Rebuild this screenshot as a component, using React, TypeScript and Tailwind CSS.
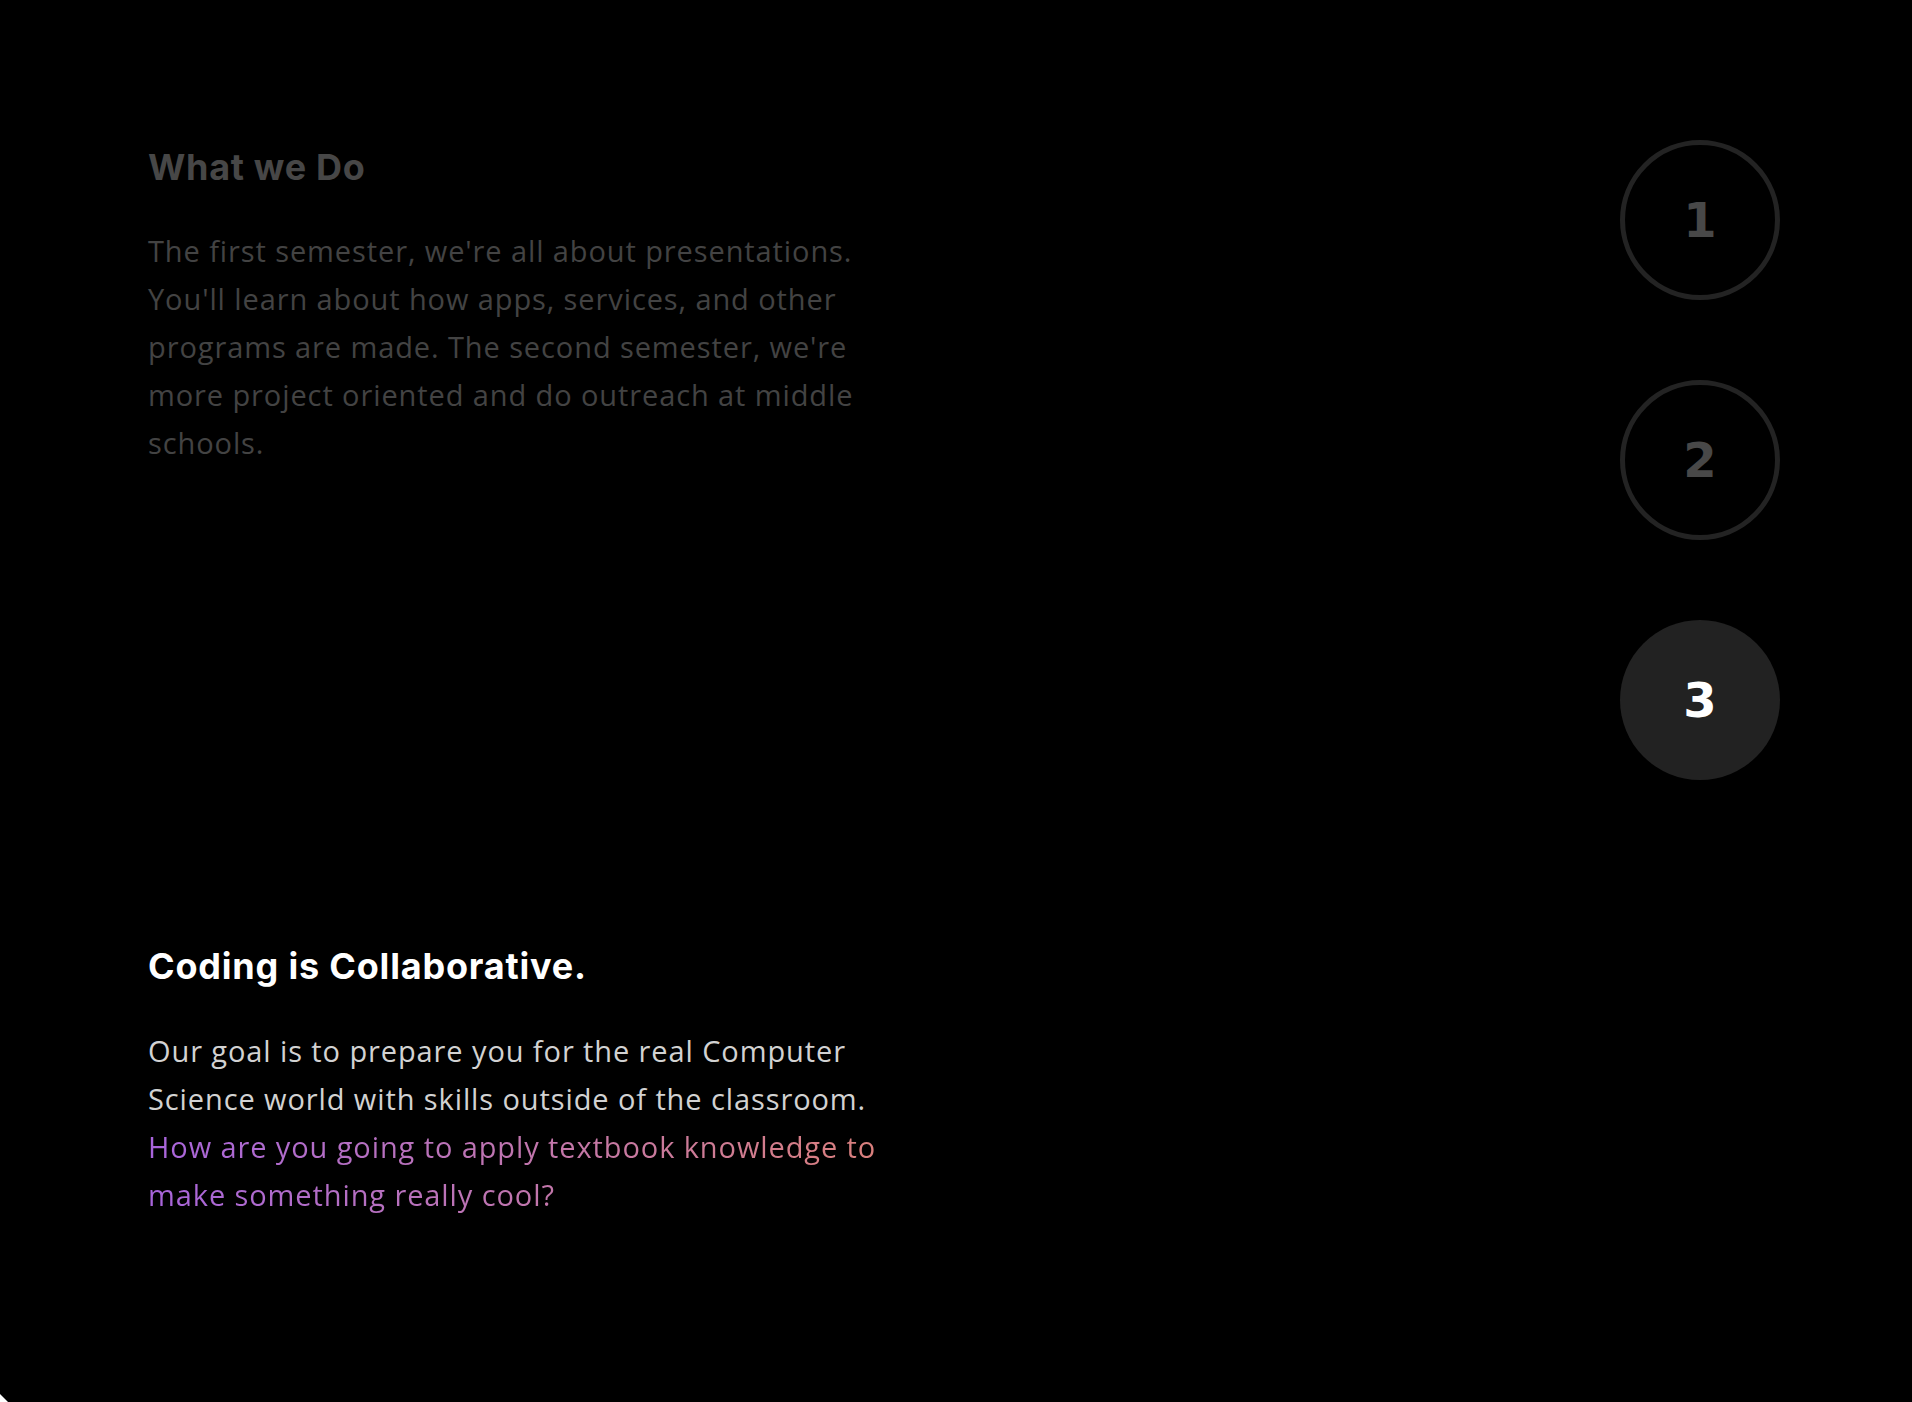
import React from "react";

const body = { fontFamily: "'Open Sans', 'Noto Sans', sans-serif" };
const head = { fontFamily: "Inter, 'Noto Sans', sans-serif" };
const num = { fontFamily: "'DejaVu Sans', sans-serif" };

function Circle({ n, active }: { n: string; active?: boolean }) {
  return (
    <div
      className={
        active
          ? "w-[160px] h-[160px] rounded-full bg-[#222222] flex items-center justify-center"
          : "w-[160px] h-[160px] rounded-full border-[5px] border-[#232323] flex items-center justify-center"
      }
    >
      <span
        style={num}
        className={
          active
            ? "text-[48px] font-bold text-white leading-none"
            : "text-[48px] font-bold text-[#484848] leading-none"
        }
      >
        {n}
      </span>
    </div>
  );
}

export default function App() {
  return (
    <div className="relative min-h-[1402px] w-full bg-black overflow-hidden">
      <div className="pl-[148px] pr-[132px] pt-[140px]">
        <div className="flex flex-row justify-between items-start">
          <div className="mt-[5px]">
            <h2
              style={head}
              className="text-[36px] leading-[45px] font-bold tracking-[0.7px] text-[#474747]"
            >
              What we Do
            </h2>
            <p
              style={body}
              className="mt-[37px] text-[29px] leading-[48px] font-medium tracking-[0.9px] text-[#434343] whitespace-nowrap"
            >
              The first semester, we're all about presentations.
              <br />
              You'll learn about how apps, services, and other
              <br />
              programs are made. The second semester, we're
              <br />
              more project oriented and do outreach at middle
              <br />
              schools.
            </p>
          </div>
          <div className="flex flex-col gap-[80px]">
            <Circle n="1" />
            <Circle n="2" />
            <Circle n="3" active />
          </div>
        </div>
        <div className="mt-[164px]">
          <h2
            style={head}
            className="text-[36px] leading-[45px] font-bold tracking-[0.8px] text-white"
          >
            Coding is Collaborative.
          </h2>
          <div
            style={body}
            className="mt-[38px] text-[29px] leading-[48px] font-medium tracking-[0.9px] whitespace-nowrap"
          >
            <p className="text-[#d2d2d2]">
              Our goal is to prepare you for the real Computer
              <br />
              Science world with skills outside of the classroom.
            </p>
            <p className="w-fit bg-gradient-to-r from-[#a864dc] to-[#da7f7c] bg-clip-text text-transparent">
              How are you going to apply textbook knowledge to
              <br />
              make something really cool?
            </p>
          </div>
        </div>
      </div>
      <svg
        className="absolute left-0 bottom-0"
        width="8"
        height="8"
        viewBox="0 0 8 8"
      >
        <polygon points="0,0 8,8 0,8" fill="#ffffff" />
      </svg>
    </div>
  );
}
